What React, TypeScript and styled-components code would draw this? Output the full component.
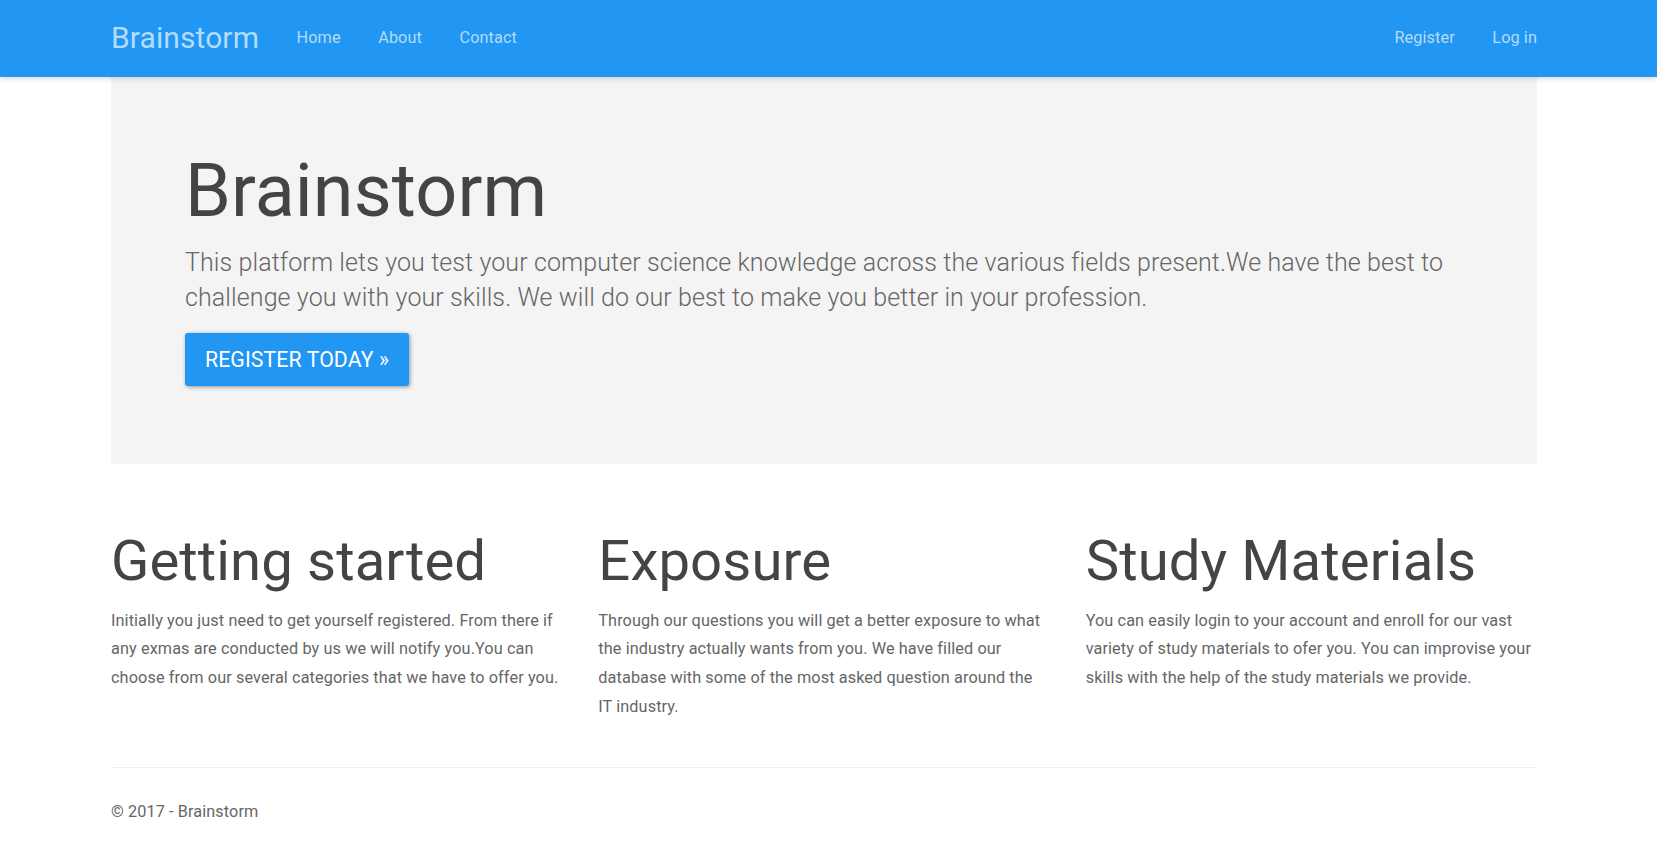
import React from "react";
import styled, { createGlobalStyle } from "styled-components";

const GlobalStyle = createGlobalStyle`
  html, body {
    margin: 0;
    padding: 0;
    background: #ffffff;
  }
  body {
    font-family: Roboto, "Helvetica Neue", Helvetica, Arial, sans-serif;
    font-size: 16.25px;
    line-height: 28.8px;
    color: #666666;
    -webkit-font-smoothing: antialiased;
    letter-spacing: 0.1px;
  }
  * { box-sizing: border-box; }
`;

const NavBar = styled.header`
  height: 77px;
  background: #2196f3;
  box-shadow: 0 1px 6px rgba(0, 0, 0, 0.18);
  position: relative;
  z-index: 2;
`;

const Container = styled.div`
  width: 1426px;
  margin-left: 111px;
`;

const NavInner = styled(Container)`
  height: 100%;
  display: flex;
  align-items: flex-start;
`;

const Brand = styled.a`
  font-size: 30px;
  line-height: 75px;
  color: #b3dcfb;
  text-decoration: none;
  margin-right: 18.75px;
`;

const NavList = styled.nav<{ $right?: boolean }>`
  display: flex;
  margin-left: ${(p) => (p.$right ? "auto" : "0")};
  margin-right: ${(p) => (p.$right ? "-18.75px" : "0")};
`;

const NavLink = styled.a`
  display: block;
  padding: 0 18.75px;
  font-size: 16.25px;
  line-height: 75px;
  color: #b3dcfb;
  text-decoration: none;
`;

const Jumbotron = styled.section`
  background: #f4f4f4;
  border-radius: 0 0 4px 4px;
  padding: 74px 72px 78px 74px;
  margin-bottom: 36px;
`;

const HeroTitle = styled.h1`
  margin: 0 0 13px;
  font-size: 73.7px;
  line-height: 81px;
  font-weight: 400;
  color: #444444;
`;

const Lead = styled.p`
  margin: 0 0 18px;
  font-size: 25px;
  line-height: 35px;
  font-weight: 300;
  color: #666666;
`;

const PrimaryButton = styled.a`
  display: inline-block;
  padding: 13px 20px;
  font-size: 21.25px;
  line-height: 27px;
  color: #ffffff;
  background: #2196f3;
  border-radius: 3px;
  text-transform: uppercase;
  text-decoration: none;
  box-shadow: 1px 1px 4px rgba(0, 0, 0, 0.4);
`;

const Columns = styled.div`
  display: grid;
  grid-template-columns: repeat(3, 1fr);
  column-gap: 36px;
`;

const Column = styled.div``;

const ColTitle = styled.h2`
  margin: 29.5px 0 15px;
  font-size: 56.25px;
  line-height: 62px;
  font-weight: 400;
  color: #444444;
`;

const ColText = styled.p`
  margin: 0 0 14.4px;
`;

const Rule = styled.hr`
  margin: 31px 0 30px;
  border: 0;
  border-top: 1px solid #eeeeee;
`;

const Footer = styled.footer`
  padding-bottom: 20px;
`;

const FooterText = styled.p`
  margin: 0;
`;

const columns = [
  {
    title: "Getting started",
    text: "Initially you just need to get yourself registered. From there if any exmas are conducted by us we will notify you.You can choose from our several categories that we have to offer you.",
  },
  {
    title: "Exposure",
    text: "Through our questions you will get a better exposure to what the industry actually wants from you. We have filled our database with some of the most asked question around the IT industry.",
  },
  {
    title: "Study Materials",
    text: "You can easily login to your account and enroll for our vast variety of study materials to ofer you. You can improvise your skills with the help of the study materials we provide.",
  },
];

export default function App() {
  return (
    <>
      <GlobalStyle />
      <NavBar>
        <NavInner>
          <Brand href="#">Brainstorm</Brand>
          <NavList>
            <NavLink href="#">Home</NavLink>
            <NavLink href="#">About</NavLink>
            <NavLink href="#">Contact</NavLink>
          </NavList>
          <NavList $right>
            <NavLink href="#">Register</NavLink>
            <NavLink href="#">Log in</NavLink>
          </NavList>
        </NavInner>
      </NavBar>
      <Container>
        <Jumbotron>
          <HeroTitle>Brainstorm</HeroTitle>
          <Lead>
            This platform lets you test your computer science knowledge across the various fields
            present.We have the best to challenge you with your skills. We will do our best to make
            you better in your profession.
          </Lead>
          <PrimaryButton href="#">Register today »</PrimaryButton>
        </Jumbotron>
        <Columns>
          {columns.map((c) => (
            <Column key={c.title}>
              <ColTitle>{c.title}</ColTitle>
              <ColText>{c.text}</ColText>
            </Column>
          ))}
        </Columns>
        <Rule />
        <Footer>
          <FooterText>© 2017 - Brainstorm</FooterText>
        </Footer>
      </Container>
    </>
  );
}
